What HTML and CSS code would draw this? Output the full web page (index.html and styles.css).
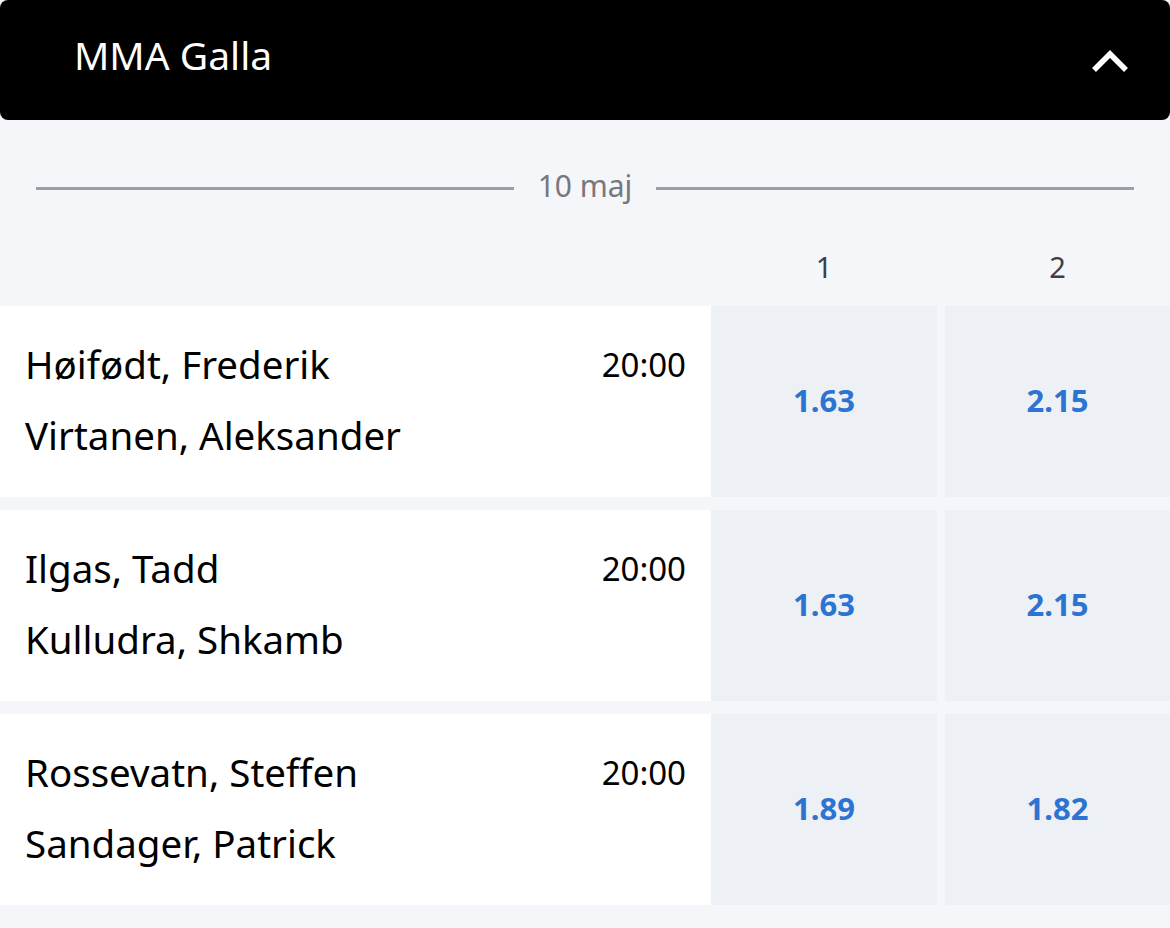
FILE: index.html
```html
<!DOCTYPE html>
<html lang="da">
<head>
<meta charset="utf-8">
<title>MMA Galla</title>
<link rel="stylesheet" href="styles.css">
</head>
<body>
<div class="page">
  <div class="header">
    <span class="title">MMA Galla</span>
    <svg class="chevron" width="36" height="24" viewBox="0 0 36 24"><path d="M2 21 L18 5 L34 21" fill="none" stroke="#fff" stroke-width="5.5"/></svg>
  </div>
  <div class="date"><span class="line"></span><span class="date-text">10 maj</span><span class="line"></span></div>
  <div class="cols"><div class="cols-spacer"></div><div class="col">1</div><div class="col col2">2</div></div>

  <div class="row">
    <div class="match">
      <div class="names"><div>Høifødt, Frederik</div><div>Virtanen, Aleksander</div></div>
      <div class="time">20:00</div>
    </div>
    <div class="odd">1.63</div>
    <div class="odd odd2">2.15</div>
  </div>
  <div class="row">
    <div class="match">
      <div class="names"><div>Ilgas, Tadd</div><div>Kulludra, Shkamb</div></div>
      <div class="time">20:00</div>
    </div>
    <div class="odd">1.63</div>
    <div class="odd odd2">2.15</div>
  </div>
  <div class="row">
    <div class="match">
      <div class="names"><div>Rossevatn, Steffen</div><div>Sandager, Patrick</div></div>
      <div class="time">20:00</div>
    </div>
    <div class="odd">1.89</div>
    <div class="odd odd2">1.82</div>
  </div>
</div>
</body>
</html>
```

FILE: styles.css
```css
html, body {
  margin: 0;
  padding: 0;
  background: #f5f6fa;
}
body {
  font-family: "Noto Sans", "Open Sans", sans-serif;
  width: 1170px;
  height: 928px;
  overflow: hidden;
}
.header {
  height: 120px;
  background: #000;
  border-radius: 8px;
  display: flex;
  align-items: center;
  justify-content: space-between;
  padding: 0 42px 0 74px;
}
.title {
  color: #fff;
  font-size: 39px;
  line-height: 1;
  margin-top: -12px;
}
.chevron {
  display: block;
  margin-top: 2px;
}
.date {
  margin-top: 40px;
  height: 56px;
  display: flex;
  align-items: center;
  padding: 0 36px;
  gap: 24px;
}
.line {
  flex: 1;
  height: 3px;
  background: #9c9ea3;
}
.date-text {
  color: #76787c;
  font-size: 30px;
  line-height: 1;
  margin-top: -4px;
}
.cols {
  height: 90px;
  display: flex;
  align-items: flex-end;
  padding-bottom: 21px;
  box-sizing: border-box;
}
.cols-spacer { width: 711px; }
.col {
  width: 226px;
  text-align: center;
  font-size: 29px;
  line-height: 36px;
  color: #3e3f42;
}
.col2 { width: 225px; margin-left: 8px; }
.row {
  display: flex;
  height: 191px;
  margin-bottom: 13px;
}
.match {
  width: 711px;
  background: #fff;
  display: flex;
  justify-content: space-between;
  align-items: center;
  padding: 0 25px 4px;
  box-sizing: border-box;
}
.names {
  font-size: 38.5px;
  line-height: 71px;
  color: #000;
}
.time {
  font-size: 33px;
  line-height: 71px;
  color: #000;
  align-self: center;
  margin-top: -71px;
}
.odd {
  width: 226px;
  background: #edf0f5;
  display: flex;
  align-items: center;
  justify-content: center;
  color: #2b74d2;
  font-weight: 700;
  font-size: 31px;
  padding-bottom: 4px;
  box-sizing: border-box;
}
.odd2 { width: 225px; margin-left: 8px; }
```
